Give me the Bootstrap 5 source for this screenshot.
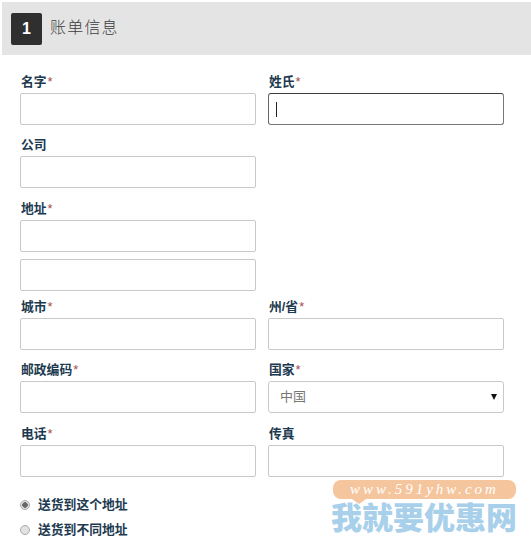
<!DOCTYPE html>
<html lang="zh-CN">
<head>
<meta charset="utf-8">
<title>账单信息</title>
<link href="https://cdn.jsdelivr.net/npm/bootstrap@5.3.0/dist/css/bootstrap.min.css" rel="stylesheet">
<style>
html,body{height:543px;overflow:hidden}
body{background:#fff;font-family:"Liberation Sans","Noto Sans CJK SC",sans-serif;position:relative}
.bill-head{margin:2px 0 0 2px;height:53px;background:#e4e4e4;padding:9px}
.bill-num{width:31px;height:32px;background:#2f2f2f;color:#fff;font-weight:700;font-size:16px;border-radius:2px}
.bill-title{font-size:16px;font-weight:300;color:#3c3c3c;letter-spacing:1.2px;margin-left:8px;line-height:30px;height:32px}
.bill-form{width:484px;margin-left:20px;padding-top:7px}
.bill-row{--bs-gutter-x:12px;--bs-gutter-y:0;margin-left:-6px;margin-right:-6px}
.bill-label{display:block;margin:12px 0 3px 1px;height:16px;line-height:16px;font-size:12.8px;font-weight:700;color:#1d3a50}
.bill-label i{font-style:normal;font-weight:400;color:#a5484a;margin-left:1px}
.bill-row-wide .bill-label{margin-top:13px}
.bill-row-tight .bill-label{margin-top:8px}
.form-control.bill-input,.form-select.bill-input{height:32px;min-height:32px;border-radius:2px;border:1px solid #c9c9c9;box-shadow:none;padding:0 7px;font-size:13px;color:#777}
.bill-extra{margin-top:7px}
.form-control.bill-focus{border-color:#3d3d3d;border-right-color:#777;border-bottom-color:#777;border-left-color:#666;border-radius:3px}
.bill-caret{width:1px;height:15px;background:#222}
.form-select.bill-input{padding-left:11px;border-radius:3px;background-image:none}
.bill-selectwrap{position:relative}
.bill-arrow{position:absolute;right:7px;top:13px;width:0;height:0;border-left:3px solid transparent;border-right:3px solid transparent;border-top:6px solid #111}
.bill-radios{margin:15px 0 0 0}
.bill-radio{height:25px;font-size:12.8px;font-weight:700;color:#1d3a50;gap:8px}
.bill-dot{width:10px;height:10px;border-radius:50%;background:#e2e2e2;border:1px solid #aaa}
.bill-dot.bill-on{background:radial-gradient(circle,#666 0 2.5px,#ddd 3px)}
.bill-mark{position:absolute;left:332px;top:480px;width:185px;height:56px}
.bill-pill{height:19px;width:183px;margin-left:1px;background:#f5c59e;border-radius:8px;color:#fff;font:italic 15px/19px "Liberation Serif",serif;letter-spacing:3px;text-align:center;position:relative}
.bill-pill::after{content:"";position:absolute;left:19px;top:19px;border-left:7px solid transparent;border-right:7px solid transparent;border-top:5px solid #f5c59e}
.bill-big{font-size:31px;line-height:32px;font-weight:900;color:#a8d0ea;margin:4px 0 0 -1px;white-space:nowrap;letter-spacing:0}
</style>
</head>
<body>
<div class="bill-head d-flex align-items-center">
  <div class="bill-num d-flex align-items-center justify-content-center">1</div>
  <div class="bill-title">账单信息</div>
</div>
<form class="bill-form">
  <div class="row bill-row">
    <div class="col-6"><label class="bill-label">名字<i>*</i></label><input class="form-control bill-input"></div>
    <div class="col-6"><label class="bill-label">姓氏<i>*</i></label><div class="form-control bill-input bill-focus d-flex align-items-center"><span class="bill-caret"></span></div></div>
  </div>
  <div class="row bill-row">
    <div class="col-6"><label class="bill-label">公司</label><input class="form-control bill-input"></div>
  </div>
  <div class="row bill-row bill-row-wide">
    <div class="col-6"><label class="bill-label">地址<i>*</i></label><input class="form-control bill-input"><input class="form-control bill-input bill-extra"></div>
  </div>
  <div class="row bill-row bill-row-tight">
    <div class="col-6"><label class="bill-label">城市<i>*</i></label><input class="form-control bill-input"></div>
    <div class="col-6"><label class="bill-label">州/省<i>*</i></label><input class="form-control bill-input"></div>
  </div>
  <div class="row bill-row">
    <div class="col-6"><label class="bill-label">邮政编码<i>*</i></label><input class="form-control bill-input"></div>
    <div class="col-6"><label class="bill-label">国家<i>*</i></label><div class="bill-selectwrap"><select class="form-select bill-input"><option>中国</option></select><span class="bill-arrow"></span></div></div>
  </div>
  <div class="row bill-row bill-row-wide">
    <div class="col-6"><label class="bill-label">电话<i>*</i></label><input class="form-control bill-input"></div>
    <div class="col-6"><label class="bill-label">传真</label><input class="form-control bill-input"></div>
  </div>
  <div class="bill-radios">
    <div class="bill-radio d-flex align-items-center"><span class="bill-dot bill-on"></span>送货到这个地址</div>
    <div class="bill-radio d-flex align-items-center"><span class="bill-dot"></span>送货到不同地址</div>
  </div>
</form>
<div class="bill-mark">
  <div class="bill-pill">www.591yhw.com</div>
  <div class="bill-big">我就要优惠网</div>
</div>
</body>
</html>
